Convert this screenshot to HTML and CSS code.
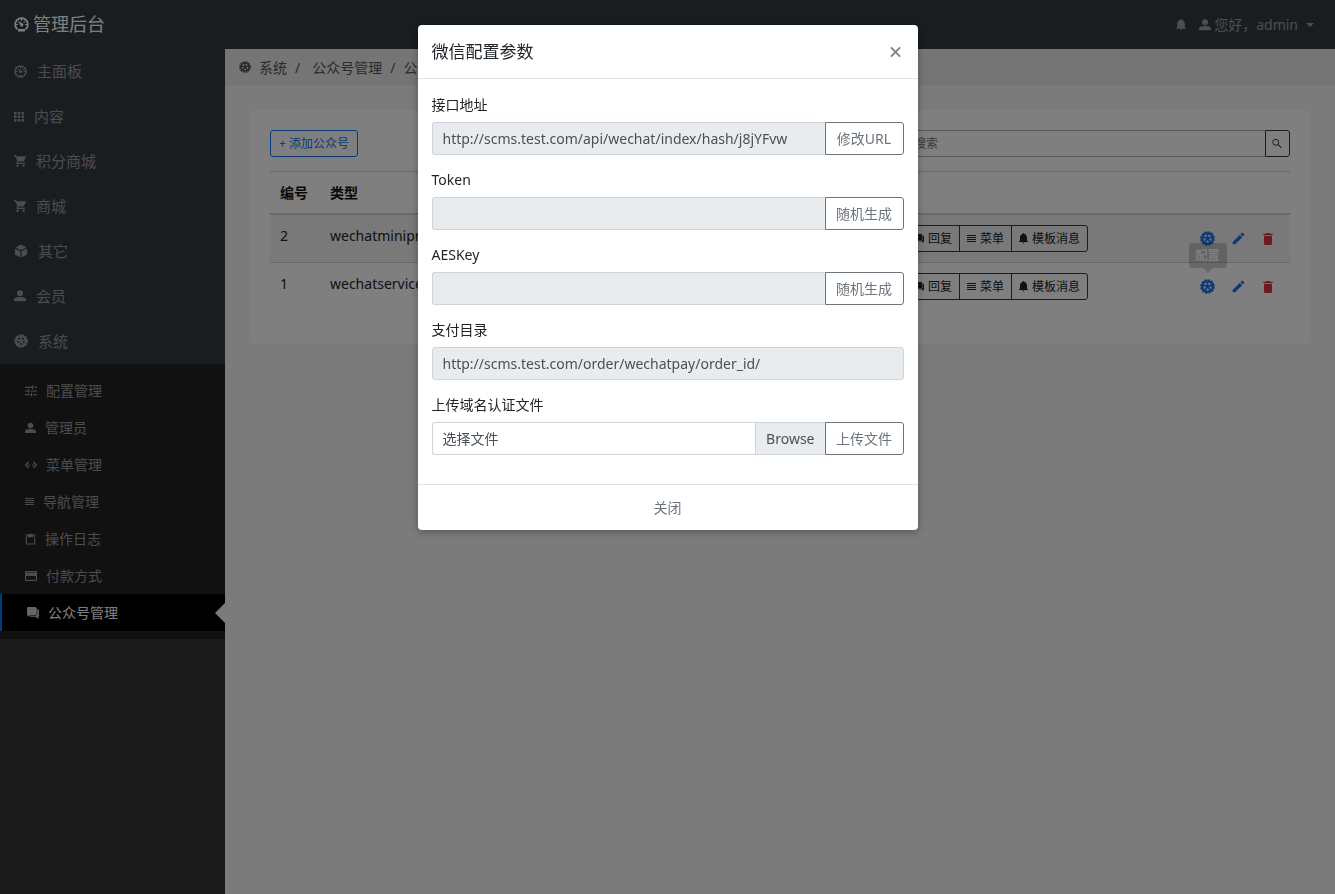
FILE: index.html
```html
<!DOCTYPE html>
<html lang="zh-CN">
<head>
<meta charset="utf-8">
<meta name="viewport" content="width=device-width, initial-scale=1">
<title>管理后台</title>
<link rel="stylesheet" href="styles.css">
</head>
<body>
<svg class="sprite" aria-hidden="true">
  <symbol id="gauge" viewBox="0 0 26 26"><path fill="none" stroke="currentColor" stroke-width="3" d="M6 21.500A11 11 0 1 1 20 21.500"/><path d="M7 21h12v4H7zM7 7l8.500 4.500a2.800 2.800 0 1 1-4 4z"/><path d="M12 3h2v4h-2zM19 12h4v2h-4zM3 12h4v2H3zM17.500 7l2 1.500-2 2-1.500-1.500z"/></symbol>
  <symbol id="apps" viewBox="0 0 20 20"><path d="M0 1h5v5H0zM7.500 1h5v5h-5zM15 1h5v5h-5zM0 8h5v5H0zM7.500 8h5v5h-5zM15 8h5v5h-5zM0 15h5v5H0zM7.500 15h5v5h-5zM15 15h5v5h-5z"/></symbol>
  <symbol id="cart" viewBox="1 2 20 20"><path d="M17 18a2 2 0 1 1 0 4 2 2 0 0 1 0-4M7 18a2 2 0 1 1 0 4 2 2 0 0 1 0-4M1 2h3.270l.94 2H20a1 1 0 0 1 .87 1.480l-3.580 6.470c-.34.610-1 1.050-1.750 1.050H8.100l-.9 1.630-.030.120.250.250H19v2H7a2 2 0 0 1-1.760-2.960l1.360-2.450L3 4H1z"/></symbol>
  <symbol id="cube" viewBox="1 0 22 24"><path d="M12 1l9.500 4.800L12 10.500 2.500 5.800zM1.500 7.500l9.500 4.800V23l-9.500-5zM22.500 7.500L13 12.300V23l9.500-5z"/></symbol>
  <symbol id="user" viewBox="3 3 18 18"><circle cx="12" cy="8" r="4.500"/><path d="M3 20v-2c0-3.500 4.500-4.500 9-4.500s9 1 9 4.500v2z"/></symbol>
  <symbol id="wheel" viewBox="0 0 24 24"><g fill="none" stroke="currentColor"><circle cx="12" cy="12" r="10.500" stroke-width="2.400" stroke-dasharray="4 1.498"/><circle cx="12" cy="12" r="8.200" stroke-width="3.800"/><path stroke-width="2.800" d="M12 12V4M12 12l7.600-2.500M12 12l4.700 6.500M12 12l-4.700 6.500M12 12L4.400 9.500"/></g><circle cx="12" cy="12" r="3"/></symbol>
  <symbol id="tune" viewBox="2 3 20 18"><path d="M2 5h12v2H2zM14 3h2v6h-2zM18 5h4v2h-4zM2 11h5v2H2zM7 9h2v6H7zM11 11h11v2H11zM2 17h9v2H2zM12 15h2v6h-2zM16 17h6v2h-6z"/></symbol>
  <symbol id="code" viewBox="0 0 24 24"><path fill="none" stroke="currentColor" stroke-width="2.500" d="M7.500 6l-6 6 6 6M16.500 6l6 6-6 6M7 12h3M14 12h3"/></symbol>
  <symbol id="lines" viewBox="0 0 18 18"><path d="M0 2h18v2H0zM0 6h18v2H0zM0 10h18v2H0zM0 14h18v2H0z"/></symbol>
  <symbol id="clip" viewBox="2 0 20 23"><path fill="none" stroke="currentColor" stroke-width="2" d="M4 4h16v17H4z"/><path d="M7 3h2.500a2.600 2.600 0 0 1 5 0H17v5H7z"/></symbol>
  <symbol id="card" viewBox="1 3 22 18"><path fill-rule="evenodd" d="M3 3h18q2 0 2 2v14q0 2-2 2H3q-2 0-2-2V5q0-2 2-2zm0 3h18V5H3zm0 6h18v7H3z"/></symbol>
  <symbol id="chat" viewBox="1 1 22 22"><path d="M3 1h13q3 0 3 3v9q0 3-3 3H7l-5 3V15q-1-1-1-2V3q0-2 2-2z"/><path d="M20 5h1q2 0 2 2v10q0 1-1 2v4l-5-4H8q-2 0-2-2h11q3-1 3-4z"/></symbol>
  <symbol id="bell" viewBox="3 1 18 22"><path d="M10 3a2 2 0 0 1 4 0c3.500 1 5 4 5 7v6l2 2v1H3v-1l2-2v-6c0-3 1.500-6 5-7zM10 20h4a2 2 0 0 1-4 0z"/></symbol>
  <symbol id="search" viewBox="2 2 20 20"><circle cx="9.500" cy="9.500" r="6" fill="none" stroke="currentColor" stroke-width="2"/><path d="M15 13.500l6.500 6.500-1.500 1.500-6.500-6.500z"/></symbol>
  <symbol id="pencil" viewBox="2 2 20 20"><path d="M20.700 7c.4-.4.4-1 0-1.400l-2.300-2.300c-.4-.4-1-.4-1.400 0l-1.900 1.800 3.800 3.800M3 17.200V21h3.800L17.800 9.900l-3.700-3.700z"/></symbol>
  <symbol id="trash" viewBox="4 3 16 18"><path d="M19 4h-3.500l-1-1h-5l-1 1H5v2h14M6 19a2 2 0 0 0 2 2h8a2 2 0 0 0 2-2V7H6z"/></symbol>
  <symbol id="cross" viewBox="0 0 12 12"><path fill="none" stroke="currentColor" stroke-width="2" d="M1 1l10 10M11 1l-10 10"/></symbol>
</svg>

<header class="topbar">
  <a class="brand" href="#"><svg class="icon icon-15"><use href="#gauge"/></svg>管理后台</a>
  <nav class="user-nav">
    <a href="#" aria-label="通知"><svg class="icon icon-12"><use href="#bell"/></svg></a>
    <a class="user-link" href="#"><svg class="icon icon-12"><use href="#user"/></svg><span>您好，admin</span><span class="caret"></span></a>
  </nav>
</header>

<div class="shell">
  <nav class="sidebar">
    <ul class="menu">
      <li><a href="#"><svg class="icon icon-13"><use href="#gauge"/></svg>主面板</a></li>
      <li><a href="#"><svg class="icon icon-10"><use href="#apps"/></svg>内容</a></li>
      <li><a href="#"><svg class="icon icon-12"><use href="#cart"/></svg>积分商城</a></li>
      <li><a href="#"><svg class="icon icon-12"><use href="#cart"/></svg>商城</a></li>
      <li><a href="#"><svg class="icon icon-14"><use href="#cube"/></svg>其它</a></li>
      <li><a href="#"><svg class="icon icon-12"><use href="#user"/></svg>会员</a></li>
      <li><a href="#"><svg class="icon icon-14"><use href="#wheel"/></svg>系统</a></li>
    </ul>
    <ul class="submenu">
      <li><a href="#"><svg class="icon icon-12"><use href="#tune"/></svg>配置管理</a></li>
      <li><a href="#"><svg class="icon icon-11"><use href="#user"/></svg>管理员</a></li>
      <li><a href="#"><svg class="icon icon-12"><use href="#code"/></svg>菜单管理</a></li>
      <li><a href="#"><svg class="icon icon-9"><use href="#lines"/></svg>导航管理</a></li>
      <li><a href="#"><svg class="icon icon-11"><use href="#clip"/></svg>操作日志</a></li>
      <li><a href="#"><svg class="icon icon-12"><use href="#card"/></svg>付款方式</a></li>
      <li><a class="active" href="#"><svg class="icon icon-12"><use href="#chat"/></svg>公众号管理</a></li>
    </ul>
  </nav>

  <main class="main">
    <ol class="breadcrumb">
      <li><svg class="icon icon-12"><use href="#wheel"/></svg><a href="#">系统</a></li>
      <li><a href="#">公众号管理</a></li>
      <li>公众号</li>
    </ol>

    <section class="card">
      <div class="toolbar">
        <button class="btn-add" type="button">+ 添加公众号</button>
        <form class="search">
          <input type="text" placeholder="搜索" aria-label="搜索">
          <button type="button" aria-label="提交搜索"><svg class="icon icon-10"><use href="#search"/></svg></button>
        </form>
      </div>
      <table class="list">
        <thead>
          <tr><th class="col-id">编号</th><th>类型</th><th class="col-links"></th><th class="col-actions"></th></tr>
        </thead>
        <tbody>
          <tr>
            <td>2</td>
            <td>wechatminiprogram</td>
            <td><div class="btn-group"><button type="button"><svg class="icon icon-9"><use href="#chat"/></svg>回复</button><button type="button"><svg class="icon icon-9"><use href="#lines"/></svg>菜单</button><button type="button"><svg class="icon icon-9"><use href="#bell"/></svg>模板消息</button></div></td>
            <td><div class="actions">
              <a href="#" aria-label="配置"><svg class="icon icon-15"><use href="#wheel"/></svg></a>
              <a href="#" aria-label="编辑"><svg class="icon icon-13"><use href="#pencil"/></svg></a>
              <a class="danger" href="#" aria-label="删除"><svg class="icon icon-12"><use href="#trash"/></svg></a>
            </div></td>
          </tr>
          <tr>
            <td>1</td>
            <td>wechatservice</td>
            <td><div class="btn-group"><button type="button"><svg class="icon icon-9"><use href="#chat"/></svg>回复</button><button type="button"><svg class="icon icon-9"><use href="#lines"/></svg>菜单</button><button type="button"><svg class="icon icon-9"><use href="#bell"/></svg>模板消息</button></div></td>
            <td><div class="actions">
              <a class="has-tip" href="#" aria-label="配置"><svg class="icon icon-15"><use href="#wheel"/></svg><span class="tooltip">配置</span></a>
              <a href="#" aria-label="编辑"><svg class="icon icon-13"><use href="#pencil"/></svg></a>
              <a class="danger" href="#" aria-label="删除"><svg class="icon icon-12"><use href="#trash"/></svg></a>
            </div></td>
          </tr>
        </tbody>
      </table>
    </section>
  </main>
</div>

<div class="backdrop">
  <div class="modal" role="dialog" aria-modal="true" aria-labelledby="modal-title">
    <div class="modal-header">
      <h1 id="modal-title">微信配置参数</h1>
      <button class="close" type="button" aria-label="关闭窗口"><svg class="icon icon-11"><use href="#cross"/></svg></button>
    </div>
    <div class="modal-body">
      <div class="field">
        <label for="url">接口地址</label>
        <div class="input-row"><input id="url" type="text" value="http://scms.test.com/api/wechat/index/hash/j8jYFvw" readonly><button type="button">修改URL</button></div>
      </div>
      <div class="field">
        <label for="token">Token</label>
        <div class="input-row"><input id="token" type="text" readonly><button type="button">随机生成</button></div>
      </div>
      <div class="field">
        <label for="aes">AESKey</label>
        <div class="input-row"><input id="aes" type="text" readonly><button type="button">随机生成</button></div>
      </div>
      <div class="field">
        <label for="paydir">支付目录</label>
        <div class="input-row"><input id="paydir" type="text" value="http://scms.test.com/order/wechatpay/order_id/" readonly></div>
      </div>
      <div class="field">
        <label for="file">上传域名认证文件</label>
        <div class="input-row">
          <div class="file">
            <input id="file" type="file">
            <label for="file"><span class="file-name">选择文件</span><span class="file-browse">Browse</span></label>
          </div>
          <button type="button">上传文件</button>
        </div>
      </div>
    </div>
    <div class="modal-footer"><button type="button">关闭</button></div>
  </div>
</div>
</body>
</html>
```
FILE: styles.css
```css
* { box-sizing: border-box; }

body {
  margin: 0;
  min-height: 100vh;
  display: flex;
  flex-direction: column;
  font: 14px/21px "Noto Sans", "Noto Sans CJK SC", sans-serif;
  color: #212529;
  background: #f6f6f6;
}

ul, ol { list-style: none; margin: 0; padding: 0; }
a { color: inherit; text-decoration: none; }
button, input { font: inherit; margin: 0; }
button { white-space: nowrap; cursor: pointer; }

.sprite { position: absolute; width: 0; height: 0; }
.icon { display: block; flex: none; fill: currentColor; color: inherit; }
.icon-9 { width: 9px; height: 11px; }
.icon-10 { width: 10px; height: 11px; }
.icon-11 { width: 11px; height: 12px; }
.icon-12 { width: 12px; height: 12px; }
.icon-13 { width: 13px; height: 13px; }
.icon-14 { width: 14px; height: 14px; }
.icon-15 { width: 15px; height: 15px; }

/* Top bar */
.topbar {
  display: flex;
  align-items: center;
  justify-content: space-between;
  height: 49px;
  padding: 0 21px 0 14px;
  background: #343a40;
}
.brand {
  display: flex;
  align-items: center;
  gap: 4px;
  font-size: 18px;
  color: #fff;
}
.user-nav, .user-link { display: flex; align-items: center; }
.user-nav { gap: 12px; color: #999c9f; }
.user-link { gap: 3px; }
.caret {
  margin-left: 5px;
  border: 4px solid transparent;
  border-top-color: currentColor;
  border-bottom: 0;
}

/* Side menu */
.shell { flex: 1; display: flex; }
.sidebar { flex: 0 0 225px; background: #343434; }
.menu { background: #343a40; color: #999; font-size: 15px; }
.menu li { border-bottom: 1px solid #30353b; }
.menu a {
  display: flex;
  align-items: center;
  gap: 10px;
  height: 44px;
  padding: 0 14px;
}
.submenu { padding: 8px 0; background: #222; color: #999; }
.submenu a {
  position: relative;
  display: flex;
  align-items: center;
  gap: 9px;
  height: 37px;
  padding: 0 25px;
}
.submenu .active {
  border-left: 2px solid #007bff;
  background: #000;
  color: #fff;
}
.submenu .active .icon { color: #ccc; }
.submenu .active::after {
  content: "";
  position: absolute;
  right: 0;
  border: 10px solid transparent;
  border-right-color: #f6f6f6;
  border-left: 0;
}

/* Page content */
.main { flex: 1; min-width: 0; }
.breadcrumb {
  display: flex;
  align-items: center;
  height: 36px;
  padding: 0 14px;
  background: #ebebeb;
  color: #555;
}
.breadcrumb li { display: flex; align-items: center; gap: 8px; }
.breadcrumb li + li::before { content: "/"; padding-left: 8px; }
.breadcrumb li + li a { padding-left: 4px; }
.card {
  margin: 25px;
  padding: 20px 20px 34px;
  border-radius: 5px;
  background: #fff;
}
.toolbar { display: flex; justify-content: space-between; margin-bottom: 14px; }
.btn-add {
  height: 27px;
  padding: 0 8px;
  border: 1px solid #1a73ee;
  border-radius: 3px;
  background: transparent;
  color: #1a73ee;
  font-size: 12px;
}
.search { display: flex; width: 384px; height: 27px; font-size: 12px; }
.search input {
  flex: 1;
  min-width: 0;
  padding: 0 7px;
  border: 1px solid #adb1b5;
  border-right: 0;
  border-radius: 3px 0 0 3px;
  background: #fff;
}
.search input::placeholder { color: #6c757d; }
.search button {
  width: 25px;
  padding: 0 6px;
  border: 1px solid #343a40;
  border-radius: 0 3px 3px 0;
  background: transparent;
  color: #343a40;
}

.list { width: 100%; table-layout: fixed; border-collapse: collapse; }
.list th, .list td {
  padding: 10px;
  border-top: 1px solid #ccd0d4;
  text-align: left;
  vertical-align: top;
}
.list thead th { border-bottom: 2px solid #ccd0d4; color: #111; }
.list tbody tr:nth-child(odd) { background: #f2f2f2; }
.list .col-id { width: 50px; }
.list .col-links { width: 293px; }
.list .col-actions { width: 100px; }
.btn-group { display: flex; }
.btn-group button {
  display: flex;
  align-items: center;
  gap: 4px;
  height: 27px;
  padding: 0 7px;
  border: 1px solid #343a40;
  background: transparent;
  color: #212529;
  font-size: 12px;
}
.btn-group button:first-child { border-radius: 3px 0 0 3px; }
.btn-group button:last-child { border-radius: 0 3px 3px 0; }
.btn-group button + button { margin-left: -1px; }
.actions {
  display: flex;
  align-items: center;
  gap: 17px;
  height: 27px;
  color: #1a73ee;
}
.actions .danger { color: #dc3545; }
.has-tip { position: relative; }
.tooltip {
  position: absolute;
  bottom: 26px;
  left: 50%;
  transform: translateX(-50%);
  padding: 2px 7px;
  border-radius: 3px;
  background: rgba(0, 0, 0, .18);
  color: #fff;
  font-size: 12px;
  font-weight: 700;
  white-space: nowrap;
}
.tooltip::after {
  content: "";
  position: absolute;
  top: 100%;
  left: 50%;
  margin-left: -5px;
  border: 5px solid transparent;
  border-top-color: rgba(0, 0, 0, .18);
  border-bottom: 0;
}

/* Dialog */
.backdrop {
  position: fixed;
  inset: 0;
  overflow: auto;
  padding: 25px 0;
  background: rgba(0, 0, 0, .5);
}
.modal {
  width: 500px;
  max-width: 100%;
  margin: 0 auto;
  border-radius: 4px;
  background: #fff;
  box-shadow: 0 2px 8px rgba(0, 0, 0, .3);
}
.modal-header {
  display: flex;
  align-items: center;
  justify-content: space-between;
  padding: 14px;
  border-bottom: 1px solid #dee2e6;
}
.modal-header h1 { margin: 0; font-size: 17px; line-height: 25px; font-weight: 400; }
.close { padding: 3px; border: 0; background: transparent; color: #7f7f7f; }
.modal-body { padding: 15px 14px; }
.field { margin-bottom: 14px; }
.field > label { display: block; margin-bottom: 7px; }
.input-row { display: flex; height: 33px; }
.input-row > input {
  flex: 1;
  min-width: 0;
  padding: 0 10px;
  border: 1px solid #ced4da;
  border-radius: 3px;
  background: #e9ecef;
  color: #495057;
}
.input-row > input:not(:last-child) { border-right: 0; border-radius: 3px 0 0 3px; }
.input-row > button {
  padding: 0 10px;
  min-width: 79px;
  border: 1px solid #6c757d;
  border-radius: 0 3px 3px 0;
  background: #fff;
  color: #6c757d;
}
.file { position: relative; flex: 1; }
.file input { position: absolute; inset: 0; width: 100%; opacity: 0; }
.file label {
  display: flex;
  height: 100%;
  border: 1px solid #ced4da;
  border-right: 0;
  border-radius: 3px 0 0 3px;
  line-height: 31px;
  color: #495057;
}
.file-name { flex: 1; padding: 0 10px; }
.file-browse { padding: 0 10px; border-left: 1px solid #ced4da; background: #e9ecef; }
.modal-footer {
  display: flex;
  justify-content: center;
  padding: 12px;
  border-top: 1px solid #dee2e6;
}
.modal-footer button { padding: 0 10px; border: 0; background: transparent; color: #6c757d; }
```
